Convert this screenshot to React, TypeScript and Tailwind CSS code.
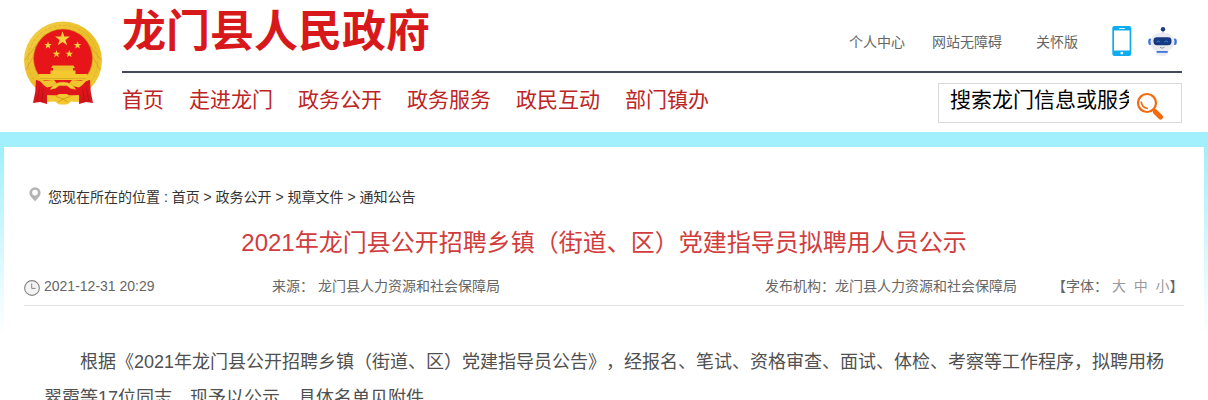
import { ReactNode } from 'react';

const navItems = ['首页', '走进龙门', '政务公开', '政务服务', '政民互动', '部门镇办'];

const STAR = 'M0 -10 L2.4 -3.1 L9.5 -3.1 L3.8 1.2 L5.9 8.1 L0 4 L-5.9 8.1 L-3.8 1.2 L-9.5 -3.1 L-2.4 -3.1 Z';

function Emblem() {
  return (
    <svg width="80" height="86" viewBox="0 0 80 86" className="block">
      <defs>
        <linearGradient id="gold" x1="0" y1="0" x2="1" y2="1">
          <stop offset="0" stopColor="#f3d04a" />
          <stop offset="0.5" stopColor="#ebbd27" />
          <stop offset="1" stopColor="#f3cb35" />
        </linearGradient>
      </defs>
      <circle cx="40" cy="40.5" r="39" fill="url(#gold)" />
      <circle cx="40" cy="40.5" r="35" fill="none" stroke="#dcab2a" strokeWidth="0.8" strokeDasharray="3 2" />
      <path d="M3 50 L18 22 M77 50 L62 22 M2 40 L22 14 M78 40 L58 14" stroke="#d3a024" strokeWidth="0.8" />
      <circle cx="40" cy="38.5" r="29.5" fill="#e71519" stroke="#d0961a" strokeWidth="0.6" />
      {/* ribbons */}
      <path d="M13 60 Q24 66 32 65 L29 74 L24 75 L24 84 L17 82 L10 83 Q13 72 13 60Z" fill="#d5141b" />
      <path d="M67 60 Q56 66 48 65 L51 74 L56 75 L56 84 L63 82 L70 83 Q67 72 67 60Z" fill="#d5141b" />
      <path d="M13 60 Q27 65 40 64 Q53 65 67 60 L67 74 Q54 76 40 75 Q26 76 13 74Z" fill="#de161b" />
      <path d="M17 67 L14 81 M63 67 L66 81 M20 69 L19 82 M60 69 L61 82" stroke="#b50f16" strokeWidth="0.8" />
      {/* gate */}
      <path d="M29.5 45.5 H50.5 L52 48 H50 V51 H30 V48 H28Z" fill="#edbd2a" />
      <path d="M27.5 50.5 H52.5 V54 H27.5Z" fill="#f5c932" />
      <path d="M15.5 54 H64.5 V57 L62 60 H18 L15.5 57Z" fill="#f3c82f" />
      <path d="M17 58.5 H63" stroke="#cf9a1c" strokeWidth="0.6" />
      <path d="M17 61 L31 60 L35 65 L24 67.5 Q20 65 17 61Z M63 61 L49 60 L45 65 L56 67.5 Q60 65 63 61Z" fill="#f0c42c" />
      {/* cog and wheat */}
      <path d="M27 69.5 Q31 62 40 62 Q49 62 53 69.5 L47.5 68.5 L44 65.8 H36 L32.5 68.5Z" fill="#f3ca36" stroke="#c98f1a" strokeWidth="0.6" strokeDasharray="2 1" />
      <path d="M24 76 L33 76.5 L36 74 H44 L47 76.5 L56 76 V82 L48 81.5 L44 84.5 H36 L32 81.5 L24 82Z" fill="#f3c82f" />
      <path d="M33 76.5 L40 79 L47 76.5 M35 82 L40 79 L45 82" stroke="#c58e16" strokeWidth="0.7" fill="none" />
      <g fill="#f7d23a">
        <path d={STAR} transform="translate(39.5 19) scale(0.78)" />
        <path d={STAR} transform="translate(25 25.3) scale(0.4)" />
        <path d={STAR} transform="translate(54.5 25.3) scale(0.4)" />
        <path d={STAR} transform="translate(33.5 34) scale(0.4)" />
        <path d={STAR} transform="translate(46.3 34) scale(0.4)" />
      </g>
    </svg>
  );
}

function PhoneIcon() {
  return (
    <svg width="20" height="30" viewBox="0 0 20 30" className="block">
      <rect x="0.3" width="19" height="30" rx="2.2" fill="#10acf0" />
      <rect x="2" y="4.5" width="15.6" height="20" fill="#fff" />
      <rect x="7" y="1.9" width="6" height="1" rx="0.5" fill="#d9f2ff" />
      <circle cx="9.8" cy="27.1" r="1.4" fill="#fff" />
    </svg>
  );
}

function RobotIcon() {
  return (
    <svg width="30" height="31" viewBox="0 0 30 31" className="block">
      <path d="M16 3 V8" stroke="#8f9cc0" strokeWidth="1" />
      <circle cx="16" cy="3.2" r="2.2" fill="#1b3a7c" />
      <ellipse cx="3" cy="15.7" rx="1.8" ry="3.3" fill="#3f74dd" />
      <ellipse cx="28" cy="15.7" rx="1.8" ry="3.3" fill="#3f74dd" />
      <path d="M3.5 15 Q5 6.5 15.5 6.5 Q26 6.5 27.5 15 Q27.5 22.5 21.5 24.5 L20.5 29 Q15.5 31 9.5 29 L8.5 24.5 Q3.5 22.5 3.5 15Z" fill="#e9ebf0" />
      <rect x="6.5" y="11.2" width="18" height="8" rx="3.4" fill="#16397f" />
      <path d="M9.5 16 q1.8 -2 3.6 0 M17.5 16 q1.8 -2 3.6 0" stroke="#3f8be6" strokeWidth="0.9" fill="none" />
      <path d="M13 21.3 q2 1.8 4.4 0" stroke="#777f90" strokeWidth="0.8" fill="none" />
      <rect x="9.7" y="25" width="11" height="1.8" fill="#3f74e0" />
    </svg>
  );
}

function SearchIcon() {
  return (
    <svg width="28" height="28" viewBox="0 0 28 28" className="block">
      <circle cx="11" cy="11" r="9" fill="none" stroke="#f56a0c" strokeWidth="2.2" />
      <path d="M5.2 9.5 Q5.5 15.5 12 16.5" fill="none" stroke="#f56a0c" strokeWidth="1.7" />
      <path d="M17 17 L19.5 19.5" stroke="#f56a0c" strokeWidth="2.8" />
      <path d="M19.5 20 L24.5 25" stroke="#f56a0c" strokeWidth="5" strokeLinecap="round" />
    </svg>
  );
}

function PinIcon() {
  return (
    <svg width="12" height="15" viewBox="0 0 12 15" className="block">
      <path fillRule="evenodd" d="M6 0.3 A5.6 5.6 0 0 1 11.6 5.9 C11.6 9 8.3 11 6 14.5 C3.7 11 0.4 9 0.4 5.9 A5.6 5.6 0 0 1 6 0.3Z M6 2.7 A2.9 2.9 0 1 0 6 8.5 A2.9 2.9 0 1 0 6 2.7Z" fill="#b3b3b3" />
    </svg>
  );
}

function ClockIcon() {
  return (
    <svg width="16" height="16" viewBox="0 0 16 16" className="block">
      <circle cx="8" cy="8" r="7.4" fill="#f3f3f3" stroke="#858585" strokeWidth="1.1" />
      <path d="M7.7 3.5 V8.4 H11.5" fill="none" stroke="#858585" strokeWidth="1" />
    </svg>
  );
}

function Meta({ className, children }: { className?: string; children: ReactNode }) {
  return <span className={`whitespace-pre ${className ?? ''}`}>{children}</span>;
}

export default function App() {
  return (
    <div className="h-[400px] overflow-hidden bg-white font-['Liberation_Sans','Noto_Sans_CJK_SC',sans-serif] [text-spacing-trim:space-all]">
      {/* Header */}
      <header className="flex h-[132px] pl-[23px]">
        <div className="w-[99px] pt-[20px]">
          <Emblem />
        </div>
        <div className="w-[1060px]">
          <div className="flex h-[73px] justify-between border-b-2 border-[#434a57]">
            <h1 className="pt-[2px] text-[44px] leading-[60px] font-bold whitespace-nowrap text-[#d7191b]">龙门县人民政府</h1>
            <div className="flex text-sm leading-5 whitespace-nowrap text-[#666]">
              <a className="mt-8 mr-[27px]">个人中心</a>
              <a className="mt-8 mr-[34px]">网站无障碍</a>
              <a className="mt-8 mr-[34px]">关怀版</a>
              <div className="mt-[26px] mr-[15px]">
                <PhoneIcon />
              </div>
              <div className="mt-[26px] mr-[5px]">
                <RobotIcon />
              </div>
            </div>
          </div>
          <div className="flex justify-between">
            <nav className="flex gap-[25px] pt-[11px] text-[21px] leading-[32px] whitespace-nowrap text-[#bd2424]">
              {navItems.map((item) => (
                <a key={item}>{item}</a>
              ))}
            </nav>
            <div className="mt-[10px] flex h-10 w-[244px] border border-[#d9d9d9] pl-[11px]">
              <div className="w-[179px] overflow-hidden text-[21px] leading-[32px] whitespace-nowrap text-black">搜索龙门信息或服务</div>
              <div className="mt-[8px] ml-[7px]">
                <SearchIcon />
              </div>
            </div>
          </div>
        </div>
      </header>

      {/* Article */}
      <div className="h-[268px] bg-gradient-to-b from-[#a2f0fd] from-[8%] to-white to-[76%] px-1 pt-[15px]">
        <main className="h-[253px] overflow-hidden bg-white">
          <div className="flex pt-[40px] pl-[25px] text-sm leading-5 text-[#333]">
            <PinIcon />
            <p className="ml-[7px] whitespace-pre">您现在所在的位置 : 首页 &gt; 政务公开 &gt; 规章文件 &gt; 通知公告</p>
          </div>
          <h2 className="mt-[16px] text-center text-2xl leading-10 text-[#d13c3c]">
            2021年龙门县公开招聘乡镇（街道、区）党建指导员拟聘用人员公示
          </h2>
          <div className="mx-[20px] mt-[13px] flex h-[30px] border-b border-[#e1e1e1] text-sm leading-5 text-[#666]">
            <div className="mt-[4px] mr-[4px]">
              <ClockIcon />
            </div>
            <Meta className="w-[228px]">2021-12-31 20:29</Meta>
            <Meta className="w-[493px]">来源： 龙门县人力资源和社会保障局</Meta>
            <Meta className="w-[287px]">发布机构：龙门县人力资源和社会保障局</Meta>
            <Meta>
              【字体： <span className="text-[#999]">大  中  小</span>】
            </Meta>
          </div>
          <p className="mt-[38px] ml-[40px] w-[1122px] indent-9 text-lg leading-9 text-[#505050]">
            根据《2021年龙门县公开招聘乡镇（街道、区）党建指导员公告》，经报名、笔试、资格审查、面试、体检、考察等工作程序，拟聘用杨翠霞等17位同志，现予以公示。具体名单见附件。
          </p>
        </main>
      </div>
    </div>
  );
}
